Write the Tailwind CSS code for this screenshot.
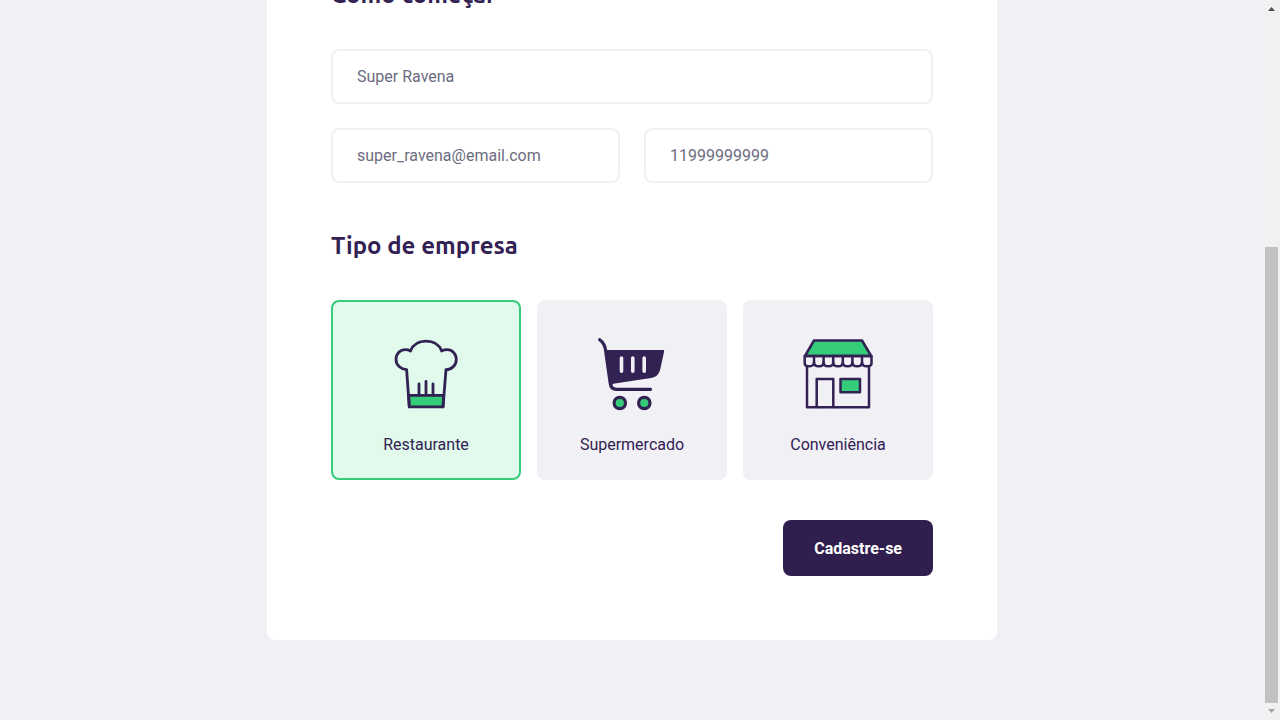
<!DOCTYPE html>
<html lang="pt-BR">
<head>
<meta charset="utf-8">
<meta name="viewport" content="width=device-width, initial-scale=1">
<title>Cadastro</title>
<script src="https://cdn.jsdelivr.net/npm/@tailwindcss/browser@4"></script>
</head>
<body class="flex h-screen overflow-hidden bg-[#f0f0f5] font-['Roboto',sans-serif] text-base text-[#322153]">
  <main class="min-w-0 flex-1 px-4 pb-20">
    <form class="mx-auto -mt-[84px] flex max-w-[730px] flex-col rounded-lg bg-white p-16">
      <h2 class="mb-10 font-['Ubuntu','Noto_Sans',sans-serif] text-2xl leading-[29px] font-bold">Como começar</h2>
      <div class="grid grid-cols-2 gap-6">
        <input type="text" aria-label="Nome" value="Super Ravena" class="col-span-2 h-[55px] min-w-0 rounded-lg border-2 border-[#f0f0f5] bg-white px-6 text-[#6c6c80] outline-none">
        <input type="email" aria-label="E-mail" value="super_ravena@email.com" class="h-[55px] min-w-0 rounded-lg border-2 border-[#f0f0f5] bg-white px-6 text-[#6c6c80] outline-none">
        <input type="tel" aria-label="Telefone" value="11999999999" class="h-[55px] min-w-0 rounded-lg border-2 border-[#f0f0f5] bg-white px-6 text-[#6c6c80] outline-none">
      </div>
      <fieldset class="mt-12">
        <legend class="mb-10 font-['Ubuntu','Noto_Sans',sans-serif] text-2xl leading-[29px] font-bold">Tipo de empresa</legend>
        <div class="grid grid-cols-3 gap-4">
          <label class="flex cursor-pointer flex-col items-center gap-4 rounded-lg border-2 border-[#f0f0f5] bg-[#f0f0f5] pt-8 pb-[18px] leading-[30px] has-checked:border-[#34cb79] has-checked:bg-[#e1faec]">
            <input type="radio" name="tipo" value="restaurante" class="sr-only" checked>
            <svg class="size-20" viewBox="6 9 80 80" fill="none" stroke="#322153" stroke-width="2.8" stroke-linecap="round" stroke-linejoin="round" aria-hidden="true">
              <path d="M28.7 70.3H63.7L63 81.8H29.3Z" fill="#34cb79"/>
              <path d="M29.3 81.8L26.6 44.7C20.7 44.3 16 40.2 16 34.5C16 28.5 20.4 24.7 25.5 24.7C27.5 24.7 29 25.2 30.5 26C33 19.5 39 16.2 46 16.2S59.2 19.5 61.7 26C63.2 25.2 65 24.7 67 24.7C72.2 24.7 76.3 28.7 76.3 34.5C76.3 40.2 71.8 44.4 66 44.7L63 81.8"/>
              <path d="M39 70V59M46 70V56.5M53 70V59"/>
            </svg>
            <span>Restaurante</span>
          </label>
          <label class="flex cursor-pointer flex-col items-center gap-4 rounded-lg border-2 border-[#f0f0f5] bg-[#f0f0f5] pt-8 pb-[18px] leading-[30px] has-checked:border-[#34cb79] has-checked:bg-[#e1faec]">
            <input type="radio" name="tipo" value="supermercado" class="sr-only">
            <svg class="size-20" viewBox="12 9 80 80" fill="none" stroke="#322153" stroke-width="3.2" stroke-linecap="round" stroke-linejoin="round" aria-hidden="true">
              <path d="M26 25H83C84 25 84.3 25.6 84.1 26.6L80.3 44C79 49.5 76.2 52 71 53L33.3 58.7C32.5 59 32.3 59.8 32.8 60.8L30 61Z" fill="#322153" stroke="none"/>
              <path d="M19.7 14.8C23.2 17.4 25 20.5 25.6 25.5L30.2 58C30.6 62 32.5 64.3 36.5 64.3H70.5"/>
              <path d="M41.5 33V46.3M52.8 33V46.3M64.2 33V46.3" stroke="#f0f0f5" stroke-width="3.6"/>
              <circle cx="39.8" cy="78" r="5.7" fill="#34cb79"/>
              <circle cx="64.3" cy="78" r="5.7" fill="#34cb79"/>
            </svg>
            <span>Supermercado</span>
          </label>
          <label class="flex cursor-pointer flex-col items-center gap-4 rounded-lg border-2 border-[#f0f0f5] bg-[#f0f0f5] pt-8 pb-[18px] leading-[30px] has-checked:border-[#34cb79] has-checked:bg-[#e1faec]">
            <input type="radio" name="tipo" value="conveniencia" class="sr-only">
            <svg class="size-20" viewBox="8 9 80 80" fill="none" stroke="#322153" stroke-width="2.5" stroke-linecap="round" stroke-linejoin="round" aria-hidden="true">
              <path d="M17 41V82.2H79V41"/>
              <path d="M26.7 82V54H43.3V82"/>
              <path d="M50.5 54H70V67.3H50.5Z" fill="#34cb79"/>
              <path d="M24 15.5H72L81.2 31H15Z" fill="#34cb79"/>
              <path d="M14.7 31V38.5C14.7 40.3 16.4 41.3 19 41.3S24 40 24 37.5C24 40 26 41.3 28.8 41.3S33.6 40 33.6 37.5C33.6 40 35.5 41.3 38.4 41.3S43.2 40 43.2 37.5C43.2 40 45 41.3 48 41.3S52.8 40 52.8 37.5C52.8 40 54.6 41.3 57.6 41.3S62.4 40 62.4 37.5C62.4 40 64.2 41.3 67.2 41.3S72 40 72 37.5C72 40 74 41.3 76.8 41.3S81.5 40.3 81.5 38.5V31Z"/>
              <path d="M24 31V38M33.6 31V38M43.2 31V38M52.8 31V38M62.4 31V38M72 31V38"/>
            </svg>
            <span>Conveniência</span>
          </label>
        </div>
      </fieldset>
      <button type="submit" class="mt-10 h-14 self-end rounded-lg bg-[#2f1e4e] px-[31px] pt-0.5 font-bold text-white">Cadastre-se</button>
    </form>
  </main>
  <div class="flex w-4 flex-col items-center bg-[#f1f1f1]" aria-hidden="true">
    <svg class="h-[17px] w-4" viewBox="0 0 16 17" fill="#505050"><path d="M4 11L7.5 7L11 11Z"/></svg>
    <div class="flex min-h-0 w-full flex-1 flex-col px-px pr-0.5">
      <div class="basis-[230px]"></div>
      <div class="flex-1 bg-[#c1c1c1]"></div>
    </div>
    <svg class="h-[17px] w-4" viewBox="0 0 16 17" fill="#a3a3a3"><path d="M4 6L7.5 10L11 6Z"/></svg>
  </div>
</body>
</html>
